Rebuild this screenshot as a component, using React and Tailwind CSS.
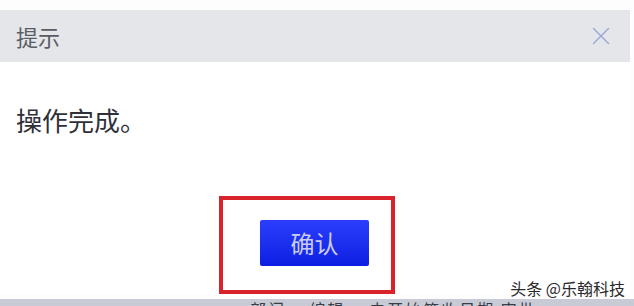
import { X } from 'lucide-react'

export default function App() {
  return (
    <div className="relative w-[634px] h-[306px] overflow-hidden bg-[#fdfdfe] font-['Noto_Sans_CJK_SC','Noto_Sans',sans-serif]">
      <div className="h-[10px]" />
      <div className="w-[630px]">
        <div className="flex h-[52px] items-center justify-between bg-[#e4e6ea] pl-[16px] pr-[14px]">
          <span className="text-[22px] leading-none text-[#5a5c63]">提示</span>
          <X className="w-[30px] h-[30px] text-[#9aa3d9]" strokeWidth={1.1} />
        </div>
        <div className="bg-white">
          <p className="pt-[45px] pl-[16px] text-[26px] leading-none text-[#2f3038]">操作完成。</p>
          <div className="mt-[63px] ml-[219px] w-[176px] h-[98px] border-[4px] border-[#d8232a] pl-[37px] pt-[20px]">
            <button className="flex w-[109px] h-[46px] items-center justify-center rounded-[2px] bg-gradient-to-b from-[#2b3dfd] to-[#0c1ee2] text-[24px] leading-none text-[#c9cdf6]">
              确认
            </button>
          </div>
        </div>
      </div>
      <div className="mt-[5px] h-[7px] overflow-hidden bg-[#c8cbd6]">
        <p className="pl-[250px] pt-[2px] text-[16px] leading-none text-[#3a3c48] whitespace-nowrap tracking-[2px]">
          部门　 编辑　 未开始签收日期 审批
        </p>
      </div>
      <span className="absolute right-[9px] bottom-[10px] text-[16px] leading-none text-[#2a2a2a] [text-shadow:0_0_2px_#fff,0_0_2px_#fff]">
        头条 @乐翰科技
      </span>
    </div>
  )
}
